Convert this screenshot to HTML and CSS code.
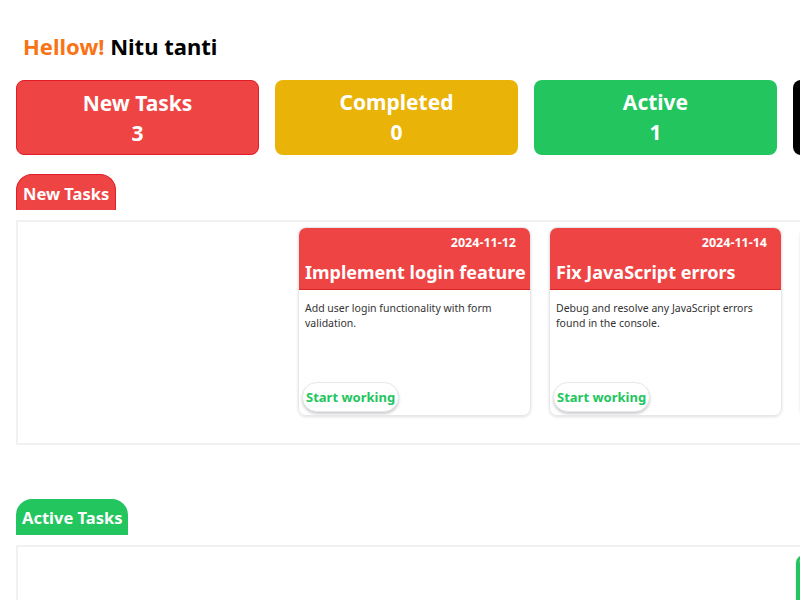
FILE: index.html
```html
<!DOCTYPE html>
<html>
<head>
<meta charset="utf-8">
<link rel="stylesheet" href="styles.css">
</head>
<body>
<div class="page">
  <h1 class="greet"><span class="hello">Hellow!</span> Nitu tanti</h1>
  <div class="stats">
    <div class="stat red"><div>New Tasks</div><div>3</div></div>
    <div class="stat yellow"><div>Completed</div><div>0</div></div>
    <div class="stat green"><div>Active</div><div>1</div></div>
    <div class="stat black"><div>Failed</div><div>0</div></div>
  </div>

  <div class="tab red">New Tasks</div>
  <div class="board">
    <div class="card">
      <div class="card-head red">
        <div class="date">2024-11-12</div>
        <div class="title">Implement login feature</div>
      </div>
      <div class="card-body">
        <p class="desc">Add user login functionality with form validation.</p>
        <button class="btn">Start working</button>
      </div>
    </div>
    <div class="card">
      <div class="card-head red">
        <div class="date">2024-11-14</div>
        <div class="title">Fix JavaScript errors</div>
      </div>
      <div class="card-body">
        <p class="desc">Debug and resolve any JavaScript errors found in the console.</p>
        <button class="btn">Start working</button>
      </div>
    </div>
    <div class="card">
      <div class="card-head red">
        <div class="date">2024-11-16</div>
        <div class="title">Update README</div>
      </div>
      <div class="card-body">
        <p class="desc">Document setup steps.</p>
        <button class="btn">Start working</button>
      </div>
    </div>
  </div>

  <div class="tab green tab-active">Active Tasks</div>
  <div class="board board-active">
    <div class="card card-green">
      <div class="card-head green">
        <div class="date">2024-11-10</div>
        <div class="title">Active task</div>
      </div>
    </div>
  </div>
</div>
</body>
</html>
```
FILE: styles.css
```css
html, body {
  margin: 0;
  padding: 0;
  overflow: hidden;
  background: #fff;
}
body {
  font-family: "Noto Sans", "Open Sans", sans-serif;
  width: 800px;
  height: 600px;
}
.page {
  padding: 0 16px;
  width: 1200px;
}
.greet {
  margin: 0;
  padding: 31px 0 0 7px;
  height: 80px;
  font-size: 22px;
  line-height: 30px;
  font-weight: 700;
  color: #000;
  box-sizing: border-box;
}
.hello { color: #f97316; }
.stats {
  display: flex;
  gap: 16px;
}
.stat {
  flex: 0 0 243px;
  height: 75px;
  box-sizing: border-box;
  border-radius: 8px;
  color: #fff;
  font-weight: 700;
  font-size: 21px;
  line-height: 30px;
  text-align: center;
  padding-top: 7px;
}
.red { background: #ef4444; }
.stat.red { border: 1px solid #e11d27; }
.yellow { background: #eab308; }
.green { background: #22c55e; }
.black { background: #000; }
.tab {
  display: inline-block;
  margin-top: 19px;
  height: 36px;
  box-sizing: border-box;
  padding: 4px 6px 0;
  border-radius: 16px 16px 0 0;
  color: #fff;
  font-size: 16.5px;
  font-weight: 700;
  line-height: 30px;
}
.tab.red { border: 1px solid #e11d27; border-bottom: none; }
.tab-active { margin-top: 54px; }
.board {
  margin-top: 10px;
  height: 225px;
  box-sizing: border-box;
  border: 2px solid #f1f1f1;
  display: flex;
  gap: 18px;
  padding: 5px 0 0 280px;
}
.card {
  flex: 0 0 233px;
  height: 189px;
  box-sizing: border-box;
  border: 1px solid #e5e7eb;
  border-radius: 8px;
  box-shadow: 0 1px 3px rgba(0,0,0,0.12);
  display: flex;
  flex-direction: column;
  overflow: hidden;
}
.card-head {
  height: 62px;
  box-sizing: border-box;
  border-bottom: 1px solid #dc2626;
  color: #fff;
  padding: 7px 14px 0 6px;
}
.date {
  text-align: right;
  font-size: 12.5px;
  font-weight: 700;
  line-height: 16px;
}
.title {
  margin-top: 7px;
  font-size: 18px;
  font-weight: 700;
  line-height: 28px;
  white-space: nowrap;
}
.card-body {
  flex: 1;
  display: flex;
  flex-direction: column;
  padding: 11px 20px 3px 3px;
}
.desc {
  margin: 0 0 0 3px;
  font-size: 10.5px;
  line-height: 15px;
  color: #333;
  flex: 1;
}
.btn {
  align-self: flex-start;
  font-family: inherit;
  background: #fff;
  border: 1px solid #e5e7eb;
  border-radius: 16px;
  box-shadow: 0 2px 3px rgba(0,0,0,0.2);
  color: #22c55e;
  font-weight: 700;
  font-size: 13px;
  line-height: 18px;
  padding: 5px 3px;
}
.board-active {
  padding-left: 778px;
  padding-top: 8px;
}
.card-green {
  border: 3px solid #22c55e;
}
```
